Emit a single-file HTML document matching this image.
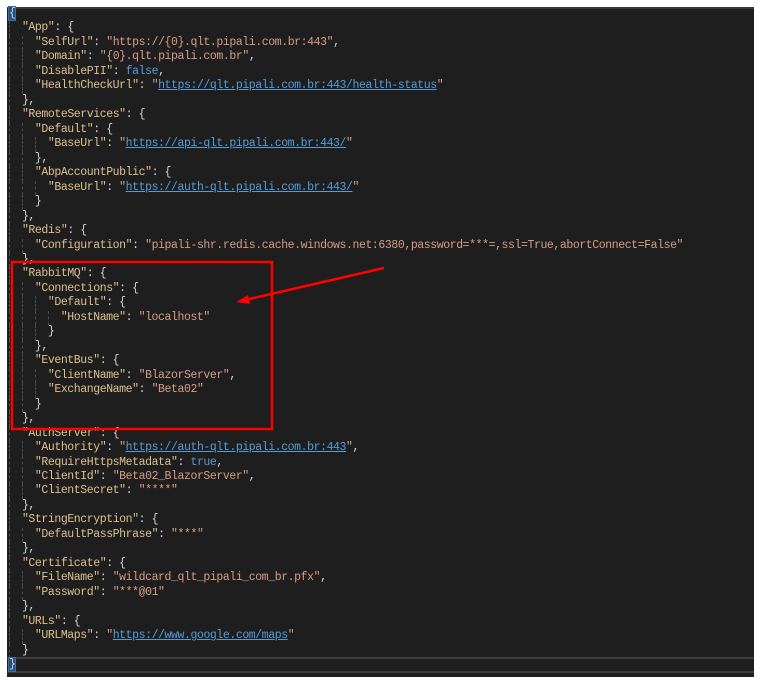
<!DOCTYPE html>
<html><head><meta charset="utf-8">
<style>
html,body{margin:0;padding:0;background:#fff;width:761px;height:685px;overflow:hidden;position:relative}
#ed{position:absolute;left:7px;top:7px;width:747px;height:670px;background:#1e1e1e;border-top:2px solid #3a3a3a;box-sizing:border-box}
#code{position:absolute;left:9px;top:7px;font-family:"Liberation Mono",monospace;font-size:11.5px;letter-spacing:-0.42px;line-height:14.47px;color:#d4d4d4;white-space:pre}
.l{height:14.47px;position:relative}
.i{display:inline-block;width:12.96px;height:14.47px;vertical-align:top;box-sizing:border-box;border-left:1px dashed #4a4a4a}
.k{color:#dcc08e}
.s{color:#d69d85}
.b{color:#569cd6}
.u{color:#569cd6;text-decoration:underline}
.hb{background:#264f78;outline:1px solid #3a6ea5}
#cur{position:absolute;left:7px;top:657px;width:747px;height:16px;border-top:2px solid #3c3c3c;border-bottom:2px solid #3c3c3c;box-sizing:border-box}
</style></head><body>
<div id="ed"></div>
<div id="cur"></div>
<div id="code"><div class="l"><span class="hb">{</span></div><div class="l"><span class="i"></span><span class="k">"App"</span>: {</div><div class="l"><span class="i"></span><span class="i"></span><span class="k">"SelfUrl"</span>: <span class="s">"https://{0}.qlt.pipali.com.br:443"</span>,</div><div class="l"><span class="i"></span><span class="i"></span><span class="k">"Domain"</span>: <span class="s">"{0}.qlt.pipali.com.br"</span>,</div><div class="l"><span class="i"></span><span class="i"></span><span class="k">"DisablePII"</span>: <span class="b">false</span>,</div><div class="l"><span class="i"></span><span class="i"></span><span class="k">"HealthCheckUrl"</span>: <span class="s">"</span><span class="u">https://qlt.pipali.com.br:443/health-status</span><span class="s">"</span></div><div class="l"><span class="i"></span>},</div><div class="l"><span class="i"></span><span class="k">"RemoteServices"</span>: {</div><div class="l"><span class="i"></span><span class="i"></span><span class="k">"Default"</span>: {</div><div class="l"><span class="i"></span><span class="i"></span><span class="i"></span><span class="k">"BaseUrl"</span>: <span class="s">"</span><span class="u">https://api-qlt.pipali.com.br:443/</span><span class="s">"</span></div><div class="l"><span class="i"></span><span class="i"></span>},</div><div class="l"><span class="i"></span><span class="i"></span><span class="k">"AbpAccountPublic"</span>: {</div><div class="l"><span class="i"></span><span class="i"></span><span class="i"></span><span class="k">"BaseUrl"</span>: <span class="s">"</span><span class="u">https://auth-qlt.pipali.com.br:443/</span><span class="s">"</span></div><div class="l"><span class="i"></span><span class="i"></span>}</div><div class="l"><span class="i"></span>},</div><div class="l"><span class="i"></span><span class="k">"Redis"</span>: {</div><div class="l"><span class="i"></span><span class="i"></span><span class="k">"Configuration"</span>: <span class="s">"pipali-shr.redis.cache.windows.net:6380,password=***=,ssl=True,abortConnect=False"</span></div><div class="l"><span class="i"></span>},</div><div class="l"><span class="i"></span><span class="k">"RabbitMQ"</span>: {</div><div class="l"><span class="i"></span><span class="i"></span><span class="k">"Connections"</span>: {</div><div class="l"><span class="i"></span><span class="i"></span><span class="i"></span><span class="k">"Default"</span>: {</div><div class="l"><span class="i"></span><span class="i"></span><span class="i"></span><span class="i"></span><span class="k">"HostName"</span>: <span class="s">"localhost"</span></div><div class="l"><span class="i"></span><span class="i"></span><span class="i"></span>}</div><div class="l"><span class="i"></span><span class="i"></span>},</div><div class="l"><span class="i"></span><span class="i"></span><span class="k">"EventBus"</span>: {</div><div class="l"><span class="i"></span><span class="i"></span><span class="i"></span><span class="k">"ClientName"</span>: <span class="s">"BlazorServer"</span>,</div><div class="l"><span class="i"></span><span class="i"></span><span class="i"></span><span class="k">"ExchangeName"</span>: <span class="s">"Beta02"</span></div><div class="l"><span class="i"></span><span class="i"></span>}</div><div class="l"><span class="i"></span>},</div><div class="l"><span class="i"></span><span class="k">"AuthServer"</span>: {</div><div class="l"><span class="i"></span><span class="i"></span><span class="k">"Authority"</span>: <span class="s">"</span><span class="u">https://auth-qlt.pipali.com.br:443</span><span class="s">"</span>,</div><div class="l"><span class="i"></span><span class="i"></span><span class="k">"RequireHttpsMetadata"</span>: <span class="b">true</span>,</div><div class="l"><span class="i"></span><span class="i"></span><span class="k">"ClientId"</span>: <span class="s">"Beta02_BlazorServer"</span>,</div><div class="l"><span class="i"></span><span class="i"></span><span class="k">"ClientSecret"</span>: <span class="s">"****"</span></div><div class="l"><span class="i"></span>},</div><div class="l"><span class="i"></span><span class="k">"StringEncryption"</span>: {</div><div class="l"><span class="i"></span><span class="i"></span><span class="k">"DefaultPassPhrase"</span>: <span class="s">"***"</span></div><div class="l"><span class="i"></span>},</div><div class="l"><span class="i"></span><span class="k">"Certificate"</span>: {</div><div class="l"><span class="i"></span><span class="i"></span><span class="k">"FileName"</span>: <span class="s">"wildcard_qlt_pipali_com_br.pfx"</span>,</div><div class="l"><span class="i"></span><span class="i"></span><span class="k">"Password"</span>: <span class="s">"***@01"</span></div><div class="l"><span class="i"></span>},</div><div class="l"><span class="i"></span><span class="k">"URLs"</span>: {</div><div class="l"><span class="i"></span><span class="i"></span><span class="k">"URLMaps"</span>: <span class="s">"</span><span class="u">https://www.google.com/maps</span><span class="s">"</span></div><div class="l"><span class="i"></span>}</div><div class="l"><span class="hb">}</span></div></div>
<svg style="position:absolute;left:0;top:0" width="761" height="685">
<rect x="12" y="262" width="260" height="167" fill="none" stroke="#ff0000" stroke-width="2.5"/>
<line x1="384" y1="268" x2="245" y2="300" stroke="#ff0000" stroke-width="2.5"/>
<polygon points="236,302 248,295 250,304" fill="#ff0000"/>
</svg>
</body></html>
